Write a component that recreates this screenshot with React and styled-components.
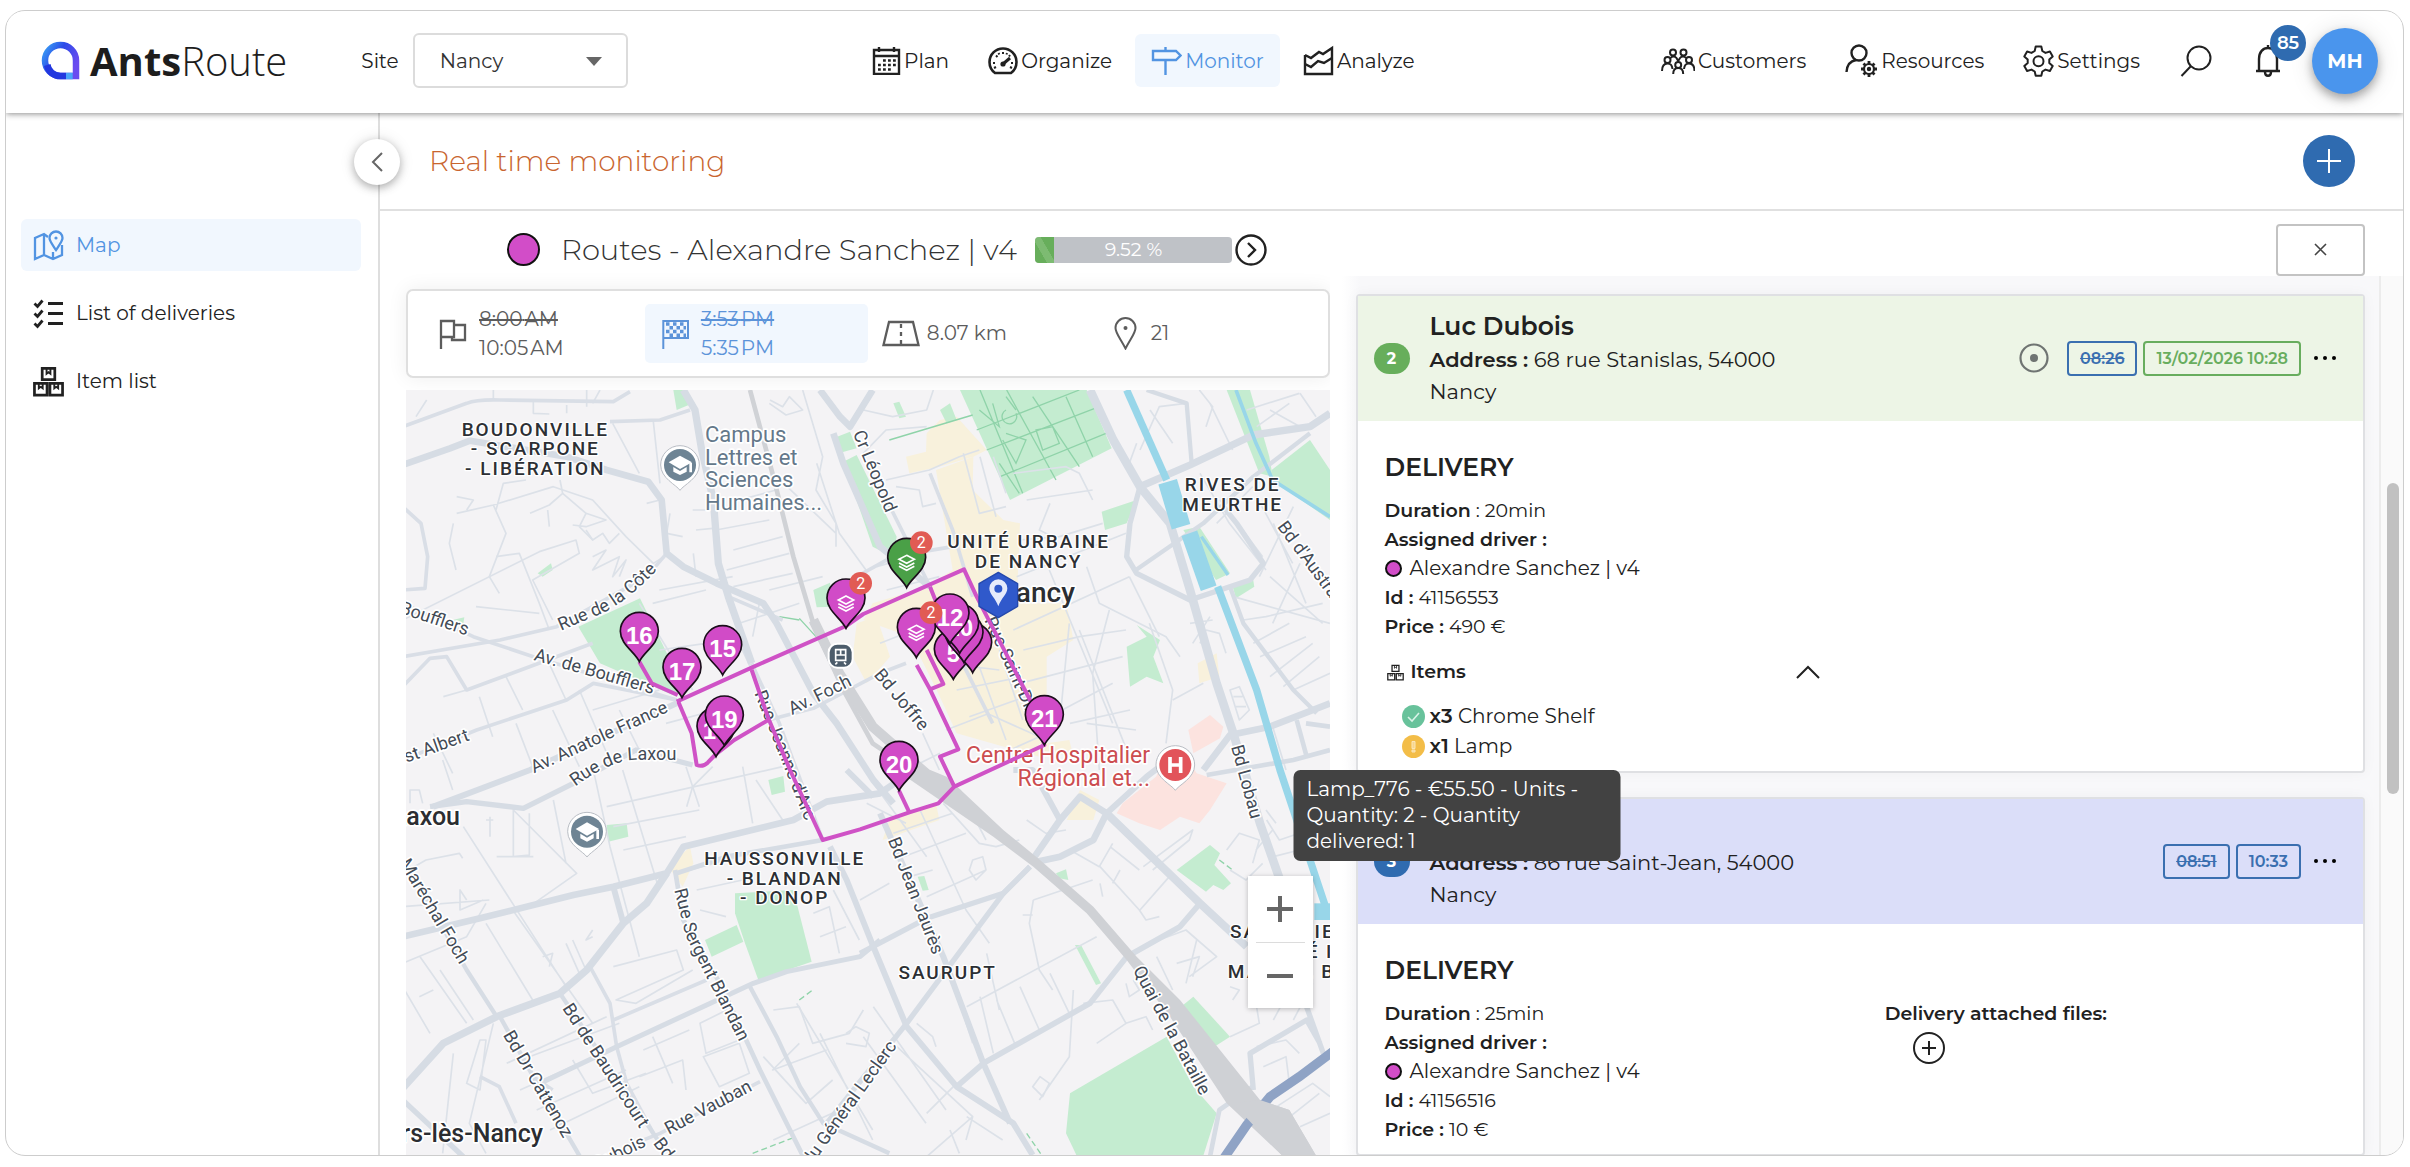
import styled, { createGlobalStyle, css } from "styled-components";

const GlobalStyle = createGlobalStyle`
    *, *::before, *::after { box-sizing: border-box; }
    body {
        margin: 0;
        background: #fff;
        color: #212121;
        font-family: Montserrat, Inter, "Open Sans", sans-serif;
        font-size: 20px;
    }
    h1, h2, h3, p, ul, dl, dd { margin: 0; padding: 0; font-weight: 400; }
    ul { list-style: none; }
    a { color: inherit; text-decoration: none; }
    button { font: inherit; color: inherit; background: none; border: 0; padding: 0; cursor: pointer; }
    svg { display: block; flex: none; }
`;

/* ---------- shell ---------- */

const Page = styled.div`
    height: 100vh;
    padding: 10px 6px 11px 5px;
`;

const Frame = styled.div`
    height: 100%;
    display: flex;
    flex-direction: column;
    border: 1px solid #cdcdcd;
    border-radius: 20px;
    overflow: hidden;
`;

const Header = styled.header`
    position: relative;
    z-index: 3;
    height: 102px;
    flex: none;
    display: flex;
    align-items: center;
    justify-content: space-between;
    padding: 0 25px 3px 35px;
    background: #fff;
    box-shadow: 0 1px 6px rgba(0, 0, 0, 0.45);
`;

const Group = styled.div`
    display: flex;
    align-items: center;
`;

const Brand = styled.a`
    display: flex;
    align-items: center;
    gap: 10px;
    margin-right: 74px;
    color: #1d1d1d;
    font: 300 40px "Open Sans", sans-serif;

    strong { font-weight: 700; }
`;

const SiteLabel = styled.label`
    margin-right: 14px;
`;

const SelectBox = styled.div`
    position: relative;

    svg {
        position: absolute;
        right: 26px;
        top: 24px;
        pointer-events: none;
    }
`;

const Select = styled.select`
    width: 215px;
    height: 55px;
    padding: 0 25px;
    appearance: none;
    border: 2px solid #dcdcdc;
    border-radius: 6px;
    background: #fff;
    font: inherit;
    color: #333;
`;

const Nav = styled.nav`
    display: flex;
    gap: 7px;
    margin-left: 14px;
`;

const NavLink = styled.a`
    display: flex;
    align-items: center;
    gap: 3px;
    height: 53px;
    padding: 0 16px;
    border-radius: 6px;
    ${({ $active }) => $active && css`
        background: #f1f7fe;
        color: #5294e2;
    `}
`;

const Tools = styled.div`
    display: flex;
    align-items: center;
    gap: 7px;
`;

const IconButton = styled.button`
    position: relative;
    display: flex;
    align-items: center;
    padding: 0 ${({ $pad }) => $pad || 16}px;
`;

const Count = styled.span`
    position: absolute;
    top: -19px;
    left: 34px;
    width: 36px;
    height: 36px;
    border-radius: 50%;
    background: #2f6bb0;
    color: #fff;
    font-size: 18px;
    font-weight: 600;
    line-height: 36px;
    text-align: center;
`;

const Avatar = styled.button`
    width: 66px;
    height: 66px;
    margin-left: 5px;
    border-radius: 50%;
    background: #4a95ed;
    color: #fff;
    font-size: 20px;
    font-weight: 700;
    box-shadow: 0 5px 10px rgba(0, 0, 0, 0.3), 0 2px 24px rgba(0, 0, 0, 0.12);
`;

const Body = styled.div`
    flex: 1;
    min-height: 0;
    display: flex;
`;

const Sidebar = styled.aside`
    position: relative;
    flex: none;
    width: 374px;
    padding: 106px 17px 0 15px;
    border-right: 2px solid #dedede;
`;

const Collapse = styled.button`
    position: absolute;
    z-index: 2;
    top: 26px;
    right: -22px;
    width: 46px;
    height: 46px;
    display: grid;
    place-items: center;
    border-radius: 50%;
    background: #fff;
    box-shadow: 0 3px 8px rgba(0, 0, 0, 0.28), 0 0 16px rgba(0, 0, 0, 0.1);
`;

const SideList = styled.ul`
    display: flex;
    flex-direction: column;
    gap: 16px;
`;

const SideLink = styled.a`
    display: flex;
    align-items: center;
    gap: 12px;
    height: 52px;
    padding: 0 12px;
    border-radius: 6px;
    ${({ $active }) => $active && css`
        background: #f1f7fe;
        color: #5294e2;
    `}
`;

const Main = styled.main`
    flex: 1;
    min-width: 0;
    display: flex;
    flex-direction: column;
`;

const TitleBar = styled.div`
    flex: none;
    height: 98px;
    display: flex;
    align-items: center;
    justify-content: space-between;
    padding: 0 48px 0 49px;
    border-bottom: 2px solid #e0e0e0;
`;

const Title = styled.h1`
    font-size: 28px;
    font-weight: 300;
    color: #c9652f;
`;

const AddButton = styled.button`
    width: 52px;
    height: 52px;
    display: grid;
    place-items: center;
    border-radius: 50%;
    background: #2f6bb0;
`;

const RouteBar = styled.div`
    flex: none;
    height: 65px;
    display: flex;
    align-items: center;
    padding: 12px 38px 0 127px;
`;

const Dot = styled.span`
    display: inline-block;
    flex: none;
    width: ${({ $size }) => $size}px;
    height: ${({ $size }) => $size}px;
    border: 2px solid #111;
    border-radius: 50%;
    background: #d24dc8;
`;

const RouteName = styled.h2`
    margin: 0 18px 0 21px;
    font-size: 29px;
    font-weight: 300;
    color: #333;
    white-space: nowrap;
`;

const Progress = styled.div`
    position: relative;
    width: 197px;
    height: 26px;
    margin-right: 3px;
    border-radius: 4px;
    overflow: hidden;
    background: #bfc2c7;
    color: #fff;
    font-size: 19px;
    line-height: 26px;
    text-align: center;
`;

const ProgressFill = styled.div`
    position: absolute;
    inset: 0 auto 0 0;
    background: linear-gradient(60deg, #67ae5b 35%, #7dbb72 36%, #7dbb72 60%, #67ae5b 61%);
`;

const CloseButton = styled.button`
    width: 89px;
    height: 52px;
    margin-left: auto;
    display: grid;
    place-items: center;
    border: 2px solid #c3c3c3;
    border-radius: 4px;
`;

const Columns = styled.div`
    flex: 1;
    min-height: 0;
    display: grid;
    grid-template-columns: minmax(0, 950fr) minmax(0, 1050fr) 24px;
    grid-template-rows: minmax(0, 1fr);
`;

/* ---------- left column ---------- */

const LeftColumn = styled.section`
    display: flex;
    flex-direction: column;
    gap: 12px;
    min-height: 0;
    padding: 13px 0 0 26px;
`;

const Stats = styled.div`
    flex: none;
    display: grid;
    grid-template-columns: repeat(4, 1fr);
    padding: 13px 14px;
    border: 2px solid #dfdfdf;
    border-radius: 7px;
    background: #fff;
    box-shadow: 0 0 20px rgba(0, 0, 0, 0.07);
`;

const Stat = styled.div`
    display: flex;
    align-items: center;
    gap: ${({ $gap }) => $gap || 12}px;
    min-height: 59px;
    padding: 0 ${({ $pad }) => $pad || 17}px;
    border-radius: 5px;
    line-height: 29px;
    color: #5c5c5c;
    ${({ $active }) => $active && css`
        background: #f1f7fe;
        color: #5b93d9;
    `}

    del, span { display: block; }
`;

const MapBox = styled.div`
    position: relative;
    flex: 1;
    min-height: 0;
    overflow: hidden;
    background: #f4f3f5;
`;

const MapSvg = styled.svg`
    width: 100%;
    height: 100%;
`;

const ZoomBox = styled.div`
    position: absolute;
    right: 17px;
    bottom: 147px;
    width: 65px;
    padding: 0 8px;
    background: #fff;
    box-shadow: 0 1px 5px rgba(0, 0, 0, 0.25);
`;

const ZoomButton = styled.button`
    width: 100%;
    height: 66px;
    display: grid;
    place-items: center;

    & + & { border-top: 1px solid #dcdcdc; }
`;

/* ---------- right column ---------- */

const List = styled.section`
    min-height: 0;
    display: flex;
    flex-direction: column;
    gap: 24px;
    padding: 18px 14px 0 26px;
    background: linear-gradient(to right, #fff 12px, #f8f8fa 30px);
`;

const Track = styled.div`
    padding: 207px 4px 0 6px;
    border-left: 2px solid #ececec;
    background: #fafafa;
`;

const Thumb = styled.div`
    height: 311px;
    border-radius: 6px;
    background: #c1c1c1;
`;

const Card = styled.article`
    flex: none;
    border: 2px solid #dfe0e3;
    border-radius: 4px;
    background: #fff;
    box-shadow: 0 0 14px rgba(0, 0, 0, 0.04);
`;

const CardHeader = styled.header`
    display: flex;
    align-items: center;
    padding: 12px 26px 13px 16px;
    background: ${({ $bg }) => $bg};
`;

const Step = styled.span`
    width: 36px;
    height: 31px;
    margin-right: 20px;
    border-radius: 16px;
    background: ${({ $bg }) => $bg};
    color: #fff;
    font-size: 16px;
    font-weight: 700;
    line-height: 31px;
    text-align: center;
`;

const Customer = styled.div`
    width: 380px;
    margin-right: auto;
    line-height: 32px;
    font-size: 21px;
`;

const CustomerName = styled.h3`
    min-height: 36px;
    font-size: 25px;
    font-weight: 600;
    line-height: 36px;
`;

const Bold = styled.strong`
    font-weight: 600;
`;

const Tag = styled.span`
    height: 35px;
    margin-left: 6px;
    padding: 0 11px;
    border: 2px solid;
    border-radius: 4px;
    color: ${({ $green }) => ($green ? "#68ad5e" : "#3a6fb0")};
    font-size: 16px;
    font-weight: 600;
    line-height: 32px;
    text-decoration: ${({ $old }) => ($old ? "line-through" : "none")};
`;

const MoreButton = styled.button`
    margin-left: 12px;
`;

const TargetIcon = styled.svg`
    margin-right: 12px;
`;

const CardBody = styled.div`
    display: grid;
    grid-template-columns: 1fr 1fr;
    column-gap: 48px;
    padding: 28px 26px 10px 27px;
`;

const SectionTitle = styled.h3`
    grid-column: 1 / -1;
    margin-bottom: 11px;
    font-size: 25px;
    font-weight: 600;
    line-height: 36px;
`;

const Details = styled.div`
    font-size: 19px;
    line-height: 29px;
`;

const Driver = styled.p`
    display: flex;
    align-items: center;
    gap: 8px;
    font-size: 20px;
`;

const Attached = styled.div`
    font-size: 19px;
    line-height: 29px;

    button { margin: 4px 28px; }
`;

const ItemsHead = styled.button`
    width: 100%;
    display: flex;
    align-items: center;
    gap: 7px;
    margin: 16px 0 14px;
    padding: 0 17px 0 2px;
    font-weight: 600;
    line-height: 30px;

    svg:last-child { margin-left: auto; }
`;

const Item = styled.li`
    position: relative;
    width: fit-content;
    display: flex;
    align-items: center;
    gap: 5px;
    margin-left: 17px;
    font-size: 20px;
    line-height: 30px;
    white-space: pre;
`;

const Tooltip = styled.div`
    position: absolute;
    z-index: 5;
    top: calc(100% + 9px);
    left: 50%;
    transform: translateX(-50%);
    width: 327px;
    padding: 6px 13px 7px;
    border-radius: 7px;
    background: #424242;
    color: #fff;
    font-size: 20px;
    line-height: 26px;
    white-space: normal;
`;

/* ---------- icons ---------- */

const Icon = ({ size = 32, width, height, box = "0 0 32 32", sw = 2, children }) => (
    <svg width={width || size} height={height || size} viewBox={box} fill="none" stroke="currentColor" strokeWidth={sw} aria-hidden="true">
        {children}
    </svg>
);

const LogoMark = () => (
    <svg width="39" height="39" viewBox="0 0 39 39" fill="none" aria-hidden="true">
        <defs>
            <linearGradient id="logoRing" x1="0" y1="0" x2="1" y2="0.6">
                <stop offset="0" stopColor="#3aa0f5" />
                <stop offset="0.45" stopColor="#2b4be8" />
                <stop offset="1" stopColor="#6a4bf0" />
            </linearGradient>
        </defs>
        <path d="M35 35V19.500A15.500 15.500 0 1 0 19.500 35Z" stroke="url(#logoRing)" strokeWidth="6.500" />
        <path d="M3 25A16.500 16.500 0 0 0 19.500 38.300H25V31.700H19.500A10 10 0 0 1 9.500 23Z" fill="#2237df" />
        <path d="M25 31.700H31.700V38.300H25Z" fill="#4aa5fa" />
    </svg>
);

const PlanIcon = () => (
    <Icon size={29} box="0 0 29 29">
        <path d="M2 4H27V28H2ZM2 10H27M7 1V6M22 1V6" strokeWidth="2.400" />
        <path d="M11 14.500H24M6 19H24M6 23.500H19" strokeWidth="2.600" strokeDasharray="2.800 2.200" />
    </Icon>
);

const GaugeIcon = () => (
    <Icon size={30} box="0 0 30 30">
        <path d="M7 27H23C27 24 28.500 20 28.500 16A13.500 13.500 0 0 0 1.500 16C1.500 20 3 24 7 27Z" strokeWidth="2.600" />
        <circle cx="15" cy="18" r="2.600" fill="currentColor" stroke="none" />
        <path d="M15 18L22 12" strokeWidth="3" />
        <path d="M5 17H7M23 17H25M15 6V8M8 9.500L9.500 11M22 9L21 10.500M6 22L8 21M24 22L22 21M10.500 7L11.300 8.500M19 7L18.500 8.500" />
    </Icon>
);

const SignIcon = () => (
    <Icon size={31} box="0 0 31 31">
        <path d="M2 6H25L29.500 10.500L25 15H2ZM14.500 2V6M14.500 16V30" strokeWidth="2.400" />
    </Icon>
);

const ChartIcon = () => (
    <Icon size={31} box="0 0 31 31">
        <path d="M2 10V29H29V3L20 9L16 7L8 13L2 10" strokeWidth="2.400" />
        <path d="M2 19L8 22L15 16L21 18L29 13" strokeWidth="2.400" />
    </Icon>
);

const CustomersIcon = () => (
    <Icon width={34} height={26} box="0 0 34 26">
        <circle cx="12" cy="4.500" r="3" />
        <circle cx="22.500" cy="4.500" r="3" />
        <circle cx="6.500" cy="12" r="3" />
        <circle cx="28" cy="12" r="3" />
        <circle cx="17.200" cy="17" r="3" />
        <path d="M1 23C1 18 3 15.500 6.500 15.500S11 17 11.500 21M33.500 23C33.500 18 31.500 15.500 28 15.500S23.500 17 23 21M12.200 26C12.200 22 14 20 17.200 20S22.200 22 22.200 26M9.500 10C11 8 14 8 15.500 10L17.200 13L19 10C20.500 8 23.500 8 25 10" />
    </Icon>
);

const ResourcesIcon = () => (
    <Icon width={33} height={34} box="0 0 33 34">
        <circle cx="14" cy="9" r="7.500" strokeWidth="2.400" />
        <path d="M1.500 28C2 21 5 17 11 16" strokeWidth="2.400" />
        <circle cx="24" cy="25" r="5" strokeWidth="2.200" />
        <circle cx="24" cy="25" r="1.200" fill="currentColor" />
        <path d="M24 17V20M24 30V33M16 25H19M29 25H32M18.500 19.500L20.500 21.500M27.500 28.500L29.500 30.500M29.500 19.500L27.500 21.500M20.500 28.500L18.500 30.500" strokeWidth="2.800" />
    </Icon>
);

const GearIcon = () => (
    <Icon width={31} height={32} box="0 0 31 32">
        <path d="M12.700 1.500H18.300L19.300 6L22.500 7.900L26.900 6.500L29.700 11.400L26.300 14.500V18L29.700 21.100L26.900 26L22.500 24.600L19.300 26.500L18.300 30.800H12.700L11.700 26.500L8.500 24.600L4.100 26L1.300 21.100L4.700 18V14.500L1.300 11.400L4.100 6.500L8.500 7.900L11.700 6Z" strokeLinejoin="round" />
        <circle cx="15.500" cy="16.200" r="5" />
    </Icon>
);

const SearchIcon = () => (
    <Icon size={32}>
        <circle cx="19" cy="13" r="11.500" />
        <path d="M11 21L1.500 31" />
    </Icon>
);

const BellIcon = () => (
    <Icon width={26} height={34} box="0 0 26 34">
        <path d="M1 27H25M4 27V15C4 8 8 4 13 4S22 8 22 15V27M13 1V4" strokeWidth="2.400" />
        <path d="M10 28C10 33 16 33 16 28" strokeWidth="2.400" />
    </Icon>
);

const MapIcon = () => (
    <Icon size={31} box="0 0 31 31">
        <path d="M15 7L11 4L2 8V29L11 25L20 29L29 25V15M11 4V25M20 22V29" strokeWidth="2.300" />
        <path d="M23 20C19 14 16.500 11 16.500 8A6.500 6.500 0 0 1 29.500 8C29.500 11 27 14 23 20Z" strokeWidth="2.300" />
        <circle cx="23" cy="8" r="1.600" fill="currentColor" stroke="none" />
    </Icon>
);

const ChecklistIcon = () => (
    <Icon size={31} box="0 0 31 31">
        <path d="M15 5.500H30M15 15.500H30M15 25.500H30" strokeWidth="2.800" />
        <path d="M1.500 5.500L4.500 8.500L9.500 2.500M1.500 15.500L4.500 18.500L9.500 12.500M1.500 25.500L4.500 28.500L9.500 22.500" strokeWidth="2.800" />
    </Icon>
);

const BoxesIcon = ({ size = 31, sw = 2.800 }) => (
    <Icon size={size} sw={sw}>
        <path d="M9.500 2.500H22.500V14H9.500ZM1.500 18H14.500V30H1.500ZM17.500 18H30.500V30H17.500Z" />
        <path d="M14 3V8L16 6.500L18 8V3M6 18V23L8 21.500L10 23V18M22 18V23L24 21.500L26 23V18" strokeWidth={sw * 0.7} />
    </Icon>
);

const FlagIcon = () => (
    <Icon width={28} height={32} box="0 0 28 32">
        <path d="M2 31V3H15V19H2M15 7H26V22H13V19" strokeWidth="2.300" />
    </Icon>
);

const FinishIcon = () => (
    <Icon width={27} height={30} box="0 0 27 30">
        <path d="M1.300 30V2H26V19H1.300" />
        <path d="M4 5H24M4 12.500H24" strokeWidth="3.500" strokeDasharray="3.500 3.500" />
        <path d="M7.500 8.700H24M7.500 16.200H24" strokeWidth="3.500" strokeDasharray="3.500 3.500" />
    </Icon>
);

const RoadIcon = () => (
    <Icon width={38} height={27} box="0 0 38 27">
        <path d="M7 2H31L36.500 25H1.500ZM19 4V8M19 12V16M19 20V24" strokeWidth="2.300" />
    </Icon>
);

const PinIcon = () => (
    <Icon width={23} height={33} box="0 0 23 33">
        <path d="M11.500 31.500C6 21 1.500 16 1.500 11A10 10 0 0 1 21.500 11C21.500 16 17 21 11.500 31.500Z" />
        <circle cx="11.500" cy="11" r="2" fill="currentColor" stroke="none" />
    </Icon>
);

const CheckBadge = () => (
    <svg width="23" height="23" viewBox="0 0 23 23" aria-hidden="true">
        <circle cx="11.500" cy="11.500" r="11.500" fill="#68c29b" />
        <path d="M6 12L10 16L17 8" fill="none" stroke="#d9f3e8" strokeWidth="1.600" />
    </svg>
);

const AlertBadge = () => (
    <svg width="23" height="23" viewBox="0 0 23 23" aria-hidden="true">
        <circle cx="11.500" cy="11.500" r="11.500" fill="#f3bd48" />
        <path d="M10 6.500H13V13.500H10ZM10 15H13V17H10Z" fill="#f8d68c" stroke="#fbe6b8" strokeWidth="1" />
    </svg>
);

/* ---------- map drawing, three units to a pixel ---------- */

const parks = [
    "M517 710L702 625L812 850V920L582 820Z",
    "M802 0H830L848 45L812 60Z",
    "M1282 145L1332 125L1352 175L1297 190Z",
    "M1312 215L1352 195L1472 440L1460 500L1400 470Z",
    "M1222 600L1272 578L1282 650L1232 652Z",
    "M395 550L435 520L440 540L410 560Z",
    "M140 690L175 682L172 700Z",
    "M1662 0H2042L2117 175L1812 330Z",
    "M1602 60L1632 40L1652 90L1622 100Z",
    "M1462 40L1480 35L1500 80L1480 85Z",
    "M2087 365L2192 330L2162 400L2097 420Z",
    "M2162 770L2222 740L2192 705L2262 750L2242 800L2272 880L2222 860L2172 890Z",
    "M2462 0H2532L2590 200L2600 260L2560 250Z",
    "M2597 240L2712 150L2772 240V390L2600 270Z",
    "M2332 420L2380 410L2472 550L2430 570Z",
    "M2480 590L2540 560L2545 590L2490 625Z",
    "M987 1510L1162 1500L1217 1715L1057 1770L1017 1660L987 1570Z",
    "M897 1650L992 1605L1012 1655L917 1700Z",
    "M602 1305L662 1300L667 1340L607 1355Z",
    "M1087 1170L1132 1158L1137 1205L1097 1215Z",
    "M2312 1440L2412 1365L2442 1390L2425 1425L2475 1480L2452 1500L2422 1485L2400 1505Z",
    "M2007 1665L2025 1665L2085 1780L2070 1785Z",
    "M2325 1850L2362 1820L2472 1940L2425 1970Z",
    "M2282 1940L1992 2110L1980 2230L2012 2297H2392L2432 2170L2362 2090Z",
    "M1950 1450L1980 1438L1987 1470L1960 1465Z",
    "M1535 1460L1555 1458L1568 1500L1550 1502Z",
];

const districts = [
    "M1562 130L1602 90L1652 80L1742 180L1702 200L1600 230L1510 250L1500 200L1560 185Z",
    "M1590 240L1702 200L1700 300L1792 390L1842 400L1832 640H1982L2002 750L1922 800L1922 1060L1990 1050L2000 1090L1900 1100L1652 1030L1592 900L1512 740L1372 690L1400 640L1562 590L1640 540Z",
    "M1352 700L1412 680L1452 800L1382 880L1340 800Z",
    "M2375 820L2432 790L2440 860L2380 880Z",
    "M2022 1200L2080 1230L2062 1290L1982 1290Z",
    "M1450 1290L1590 1240L1600 1290L1430 1350Z",
    "M787 1430L852 1370L862 1420L830 1490Z",
];

const hospital = [
    "M2347 1020L2412 975L2452 1010L2442 1045L2362 1090Z",
    "M2250 1160L2290 1085L2340 1100L2372 1150L2462 1180L2412 1260L2380 1300L2322 1280L2262 1320L2200 1300L2132 1270L2150 1240Z",
];

const water = [
    { d: "M2162 0L2282 270", w: 22 },
    { d: "M2285 275L2325 410", w: 58 },
    { d: "M2350 430L2408 595", w: 50 },
    { d: "M2435 590L2552 900L2622 1140L2762 1560", w: 22 },
    { d: "M2490 0L2550 160L2600 270L2772 380", w: 11 },
    { d: "M2755 1540V1590", w: 60 },
    { d: "M2386 440L2466 555", w: 10 },
];

const railway = [
    { d: "M1032 0L1102 260L1162 500L1222 700L1312 900L1400 1060L1532 1150", w: 14 },
    { d: "M1222 690L1300 850L1400 1010L1560 1150", w: 30 },
];

const majorRoads = [
    { d: "M-10 225L132 175L192 152L482 200L602 240L727 275L767 330L782 490L832 530L932 580L1072 640L1112 700L1222 910L1292 1000L1402 1170L1462 1240", w: 20 },
    { d: "M832 0L867 60L887 180L922 330L937 520L967 620L1037 820", w: 22 },
    { d: "M1242 0L1302 80L1332 110L1400 0", w: 20 },
    { d: "M1282 130L1312 220L1422 470L1572 590", w: 20 },
    { d: "M2052 0L2122 150L2202 290L2292 400L2352 600L2432 880L2482 1030L2562 1300L2622 1470", w: 26 },
    { d: "M2202 290L2352 225L2542 135L2712 110L2772 70", w: 22 },
    { d: "M2202 290L2172 400L2162 500L2192 550L2352 630L2532 570L2572 520L2492 400L2452 350", w: 16 },
    { d: "M2182 545L2392 400L2542 260L2712 130", w: 13 },
    { d: "M2222 0L2342 40L2357 220", w: 13 },
    { d: "M2392 1140L2472 1035L2592 1010L2772 940", w: 20 },
    { d: "M2402 1155L2662 1110L2772 1080M2672 990L2702 1100M2700 1000L2772 1010", w: 14 },
    { d: "M2472 590L2512 700L2662 900L2732 970", w: 13 },
    { d: "M-10 1640L222 1585L502 1515L622 1490L782 1450L832 1370L1162 1290L1262 1235L1422 1210L1510 1150", w: 20 },
    { d: "M782 1450L722 1540L652 1600L542 1740L462 1810L272 1880L112 1960L-10 2095", w: 22 },
    { d: "M622 1490L652 1600", w: 18 },
    { d: "M812 1450L962 1400L1250 1350", w: 14 },
    { d: "M1322 1140L1402 1220M1272 1370L1322 1470L1402 1670L1502 1910L1652 2090L1822 2200L1880 2295", w: 18 },
    { d: "M1422 1270L1612 1700L1732 2020L1812 2200", w: 18 },
    { d: "M1362 1690L1562 1585L1792 1510L1872 1430", w: 16 },
    { d: "M1872 1430L1792 1510L1502 1900L1422 2000L1262 2200", w: 16 },
    { d: "M1652 2090L1732 2020L2052 1840L2162 1700L2322 1610L2382 1540", w: 17 },
    { d: "M2102 1270L2382 1540L2522 1670", w: 24 },
    { d: "M1872 1420L1962 1290L2022 1220L2102 1270L2062 1350L1962 1400L1892 1415", w: 20 },
    { d: "M1822 1140L1880 1140L1962 1290M2102 1270L2222 1160L2300 1100", w: 18 },
    { d: "M2542 2100L2532 1990L2702 1890L2742 1960M2662 1740L2752 1990", w: 16 },
    { d: "M-10 2130L172 2300", w: 16 },
    { d: "M72 1250L182 1235L352 1255L502 1180L690 1080L860 1125", w: 16 },
    { d: "M82 1250L372 1140L812 940", w: 18 },
    { d: "M282 1880L382 2060L522 2300M-10 1400L182 1740L272 1880", w: 13 },
    { d: "M462 1810L582 1990L762 2260", w: 13 },
    { d: "M807 1440L832 1590L942 1780L1062 2040L1192 2300", w: 14 },
    { d: "M412 2075L632 1970L902 1845L1042 1780L1142 1745L1362 1700L1422 1650", w: 15 },
    { d: "M1032 1790L1112 1940L1182 2090L1252 2200L1450 2290", w: 13 },
    { d: "M2412 2300L2440 2160L2540 2090", w: 14 },
];

const mediumRoads = [
    "M-10 110L182 40Q212 28 282 30L622 35L672 5M612 95L762 90L852 60",
    "M-10 600L57 595L65 500L45 400L-10 350",
    "M-10 640L202 740L382 800L812 930",
    "M-10 800L282 750L452 710L722 560L782 490",
    "M-10 890L72 805L122 800L182 900L560 760",
    "M-10 1110L212 1020L482 930L562 880L812 930",
    "M1087 990L1222 955L1422 850L1500 820",
    "M552 1730L612 1840L632 1970L662 2080L742 2230M622 1890L902 1770",
    "M662 2270L762 2230L1062 2075",
    "M967 620L1130 690M1037 820L1120 1000L1250 1350",
    "M1442 330L1572 590L1640 760L1760 1000M1572 250L1640 420L1700 620M1280 600L1460 500L1640 470",
    "M222 2060L280 2090L330 2200M382 2060L440 2100",
];

const minorRoads = [
    "M62 30L30 80M262 0V28M382 30V70L430 72M582 0L560 40M542 0V50M482 45V70M742 95L762 280M620 100L700 250",
    "M152 320L202 330L182 360M152 370L262 345L442 290L560 330L660 440L742 520L782 495M262 345L300 430L250 560L280 610M142 400L130 460L150 540M270 360L292 280L360 270",
    "M462 270L470 310L540 370L600 390L540 410L500 405M372 370L430 345L470 310M430 410L425 360M540 370L520 410L560 450",
    "M540 420L560 450L590 430L610 460L640 430M560 500L600 480L560 540L640 500L620 560L660 510L640 560",
    "M-10 690L400 485L510 450L520 490L380 570L440 690M270 500L340 490L400 640L430 720M210 650L400 670M100 700L20 650",
    "M722 340L762 330M792 370L782 430L830 440M860 360H900M870 420L920 415M862 490L870 560",
    "M982 480L1130 440M962 540L1150 490M982 590L1160 550M930 420L1090 390M1000 330L1110 300M760 600L980 560M740 640L900 600",
    "M1092 30L1130 50L1150 20L1190 60L1140 75L1090 40M1232 220L1300 430L1380 540M1102 250L1290 430M1190 0L1250 200L1230 300L1290 400V470",
    "M1090 600L1250 560M1060 640L1040 740M1000 700L1180 640M760 780L900 760M700 640L860 900M1000 760L1060 890M780 1000L930 960",
    "M300 860L350 960M220 920L260 1040M420 800L480 930M112 920L182 900M82 1030L140 1150M520 900L620 1130M440 960L520 1130M640 960L700 1080M560 960L760 900",
    "M12 1240V1200H40L50 1240M110 1110L140 1200M330 1000L380 1130M840 1130L880 1250M560 1130L612 1370L700 1700M650 1140L760 1500",
    "M252 1280V1340M262 1290H240M322 1250V1400L370 1395V1270M272 1400H382M322 1260L512 1450L370 1550M442 1230L480 1420M182 1530L162 1500V1560L232 1530M-10 1550L250 1530",
    "M172 1310L480 1790M-10 1450L60 1410L160 1390L170 1405M240 1600L380 1830M320 1560L560 1900M-10 1720L182 1640L240 1540",
    "M102 1740L202 1890M-10 1790L72 1930M42 1700L182 1900M82 1800L40 1820M142 1990L110 2290M262 1900L190 2200L240 2290M222 1950H240L222 2100L182 2080Z",
    "M302 2020L602 1880M342 2100L632 1970M392 2160L660 2040M432 2220L700 2090M370 2000L640 1900M500 2010L560 2110L720 2050",
    "M622 1730L812 1680L832 1740L630 1830L690 1840L860 1740M560 1620L540 1650L560 1640M410 1700L440 1690L430 1730M500 1650L540 1740M480 1660L520 1750",
    "M882 1900L962 1860L1000 1950L900 1990ZM892 2000L1000 1960L1030 2050L940 2090ZM700 2060L830 2010L840 2100M740 1940L800 2080M712 1980L850 1920",
    "M1102 1860L1180 1850L1220 1960L1330 1930L1372 1860M1320 1930L1350 1910L1390 1930L1380 1970L1320 1960M1180 1960L1100 2040L1262 1980M1072 2000L1200 2140L1280 2070",
    "M1172 1840L1400 2220M1102 2250L1300 2160M1242 1930L1400 2250M1222 1570L1270 1550L1300 1690M1242 1640L1320 1610M1282 1500L1360 1650",
    "M602 1250L1130 1130M622 1310L880 1260M652 1380L840 1340M852 1440L1000 1400M872 1500L1010 1470M882 1560L960 1580M842 1250L860 1190L920 1130M1010 1130L1040 1300M1050 1170L1130 1290",
    "M1372 60L1460 80L1562 60L1582 0M1372 190L1440 120L1562 110M1440 270L1570 240L1660 200L1720 180M1470 290L1540 300L1550 350L1590 340",
    "M1672 190L1720 370L1800 350M1722 200L1770 380M1762 200L1800 310M1822 250L1980 230L2020 250L2060 330M1932 340L1900 420L1940 440M1862 330L2060 300",
    "M1840 450L1960 440L2090 400M1832 560L2160 430M1822 720L2170 560M1930 540L2120 1000M2042 530L2080 640L2280 740L2322 800M1990 700L1960 1010M2110 660L2060 850L2080 1140",
    "M1852 780L2020 740L2160 720M1842 880L2150 800M1912 990L2120 880M1992 1000L2172 960M2020 720L2170 1100M2042 1000L2190 1020M2230 700L2300 900L2280 1060M2170 560L2260 740",
    "M1412 530L1520 500M1442 600L1600 560M1422 760L1600 690M1632 760L1720 780M1620 820L1780 840M1652 900L1850 860M1690 980L1860 920M1780 780L1850 990M1720 830L1800 1050",
    "M1602 1090L1500 1140M1620 1020L1750 970M1742 970L1900 1040L1790 1090M1550 1030L1600 1140",
    "M2202 180L2260 50L2340 40M2192 160L2170 220M2232 60L2300 160M2380 0L2420 50L2400 110M2412 40L2480 180M2522 60L2680 10M2552 110L2650 40M2592 60L2700 120M2682 10L2730 80",
    "M2382 250L2470 400L2580 540M2442 330L2570 500M2432 400L2540 290M2552 320L2660 520M2602 400L2700 640M2662 350L2560 560M2592 560L2750 700M2682 520L2600 700",
    "M2482 620L2772 700M2512 690L2580 680L2750 640M2542 760L2650 700M2562 800L2700 740M2592 860L2720 760M2632 890L2740 800M2382 760L2400 720L2440 730L2460 790",
    "M2472 900L2500 890L2530 960L2500 990ZM2482 920H2510M2490 950H2520M2412 680L2360 760M2352 700L2420 690M2392 880L2300 930M2662 900L2772 850M2600 1010L2640 1140",
    "M1382 1240L1500 1300M1402 1180L1562 1400M1462 1330L1640 1270M1492 1400L1680 1330M1512 1460L1580 1440M1542 1260L1680 1560L1750 1660M1612 1240L1720 1360L1770 1370L1840 1350M1662 1200L1740 1350",
    "M1362 1530L1450 1480M1562 1520L1740 1440M1690 1440L1700 1410L1730 1400L1740 1440L1710 1470ZM1882 1530L2060 1470M1882 1530L1870 1600L1900 1740L1940 1800M1850 1575H1880",
    "M1682 1850L2072 1640M1722 1820L1762 1990M1772 1830L1830 1970M1842 1790L1900 1920M1932 1750L1990 1870M1642 1780L1700 1960M1742 1690L1780 1860",
    "M2002 1800L1990 2000L1900 2130M2032 1840L2120 1830L2160 1900L2072 1960M2160 1900L2220 1880L2240 1920M1902 2060L1930 2080L1910 2120L1880 2090Z",
    "M1862 1290L1920 1330L1980 1320M1992 1380L2080 1430L2120 1360M2082 1430L2200 1560L2220 1590L2260 1580M2112 1370L2200 1440M2142 1440L2120 1480M2082 1480L2090 1520M2202 1560L2290 1460",
    "M2212 1430L2360 1320L2350 1350L2240 1440M2462 1380L2500 1330L2560 1350L2540 1420M2472 1440L2520 1470L2570 1420M2582 1290L2620 1350L2680 1330M2602 1400L2680 1380M2550 1380L2600 1320M2580 1260L2610 1300",
    "M2232 1660L2340 1620L2432 1700L2350 1760M2252 1700L2300 1800M2372 1650L2340 1780M2182 1770L2200 1800L2170 1820L2160 1780M2312 1720L2380 1700L2360 1760M2472 1790L2500 1800L2480 1830",
    "M2472 1940L2560 1900L2540 1780M2552 1970L2640 1950L2680 1990M2572 2030L2640 2000L2650 2080M2612 2150L2720 2080L2772 2120M2652 2180L2740 2110M2682 2210L2772 2170M2662 1890L2720 1780M2602 1890L2640 1820",
    "M1372 1940L1560 2200M1402 1850L1620 2160M1462 1960L1700 2180L1680 2250M1532 1900L1580 1940L1590 1970M1562 2170L1642 2090M1682 2180L1790 2250M1632 2220L1660 2290M1562 2300L1700 2180",
];

const railArea =
    "M1470 1140L1500 1110L1622 1160L1792 1320L1902 1410L2062 1550L2192 1700L2322 1830L2562 2130L2650 2160L2732 2300H2632L2462 2140L2292 1880L2162 1710L2042 1570L1882 1430L1762 1340Z";

const routeLines = [
    "M700 815L737 880L815 915",
    "M812 935L1032 835L1320 708L1372 672L1674 538L1712 620L1872 930L1915 1065L1645 1190L1597 1240L1510 1267L1362 1318L1250 1350L1152 1140L1087 985L1037 840",
    "M1645 1190L1602 1100L1657 1078L1572 898L1532 825M1572 898L1612 882L1562 780M1572 590L1600 660",
    "M817 935L857 1030L872 1125Q890 1132 905 1118L927 1095L985 1050L1087 990",
    "M1479 1202L1510 1267",
];

const streets = [
    { id: "cote", d: "M465 722L600 665Q680 620 762 530", text: "Rue de la Côte" },
    { id: "boufflersWest", d: "M-22 668Q90 705 205 745", text: "Boufflers" },
    { id: "boufflers", d: "M382 810Q560 860 760 918", text: "Av. de Boufflers" },
    { id: "albert", d: "M-100 1155L220 1040", text: "Ernest Albert" },
    { id: "anatole", d: "M384 1150L810 955", text: "Av. Anatole France" },
    { id: "laxou", d: "M508 1190Q620 1105 700 1110L830 1110", text: "Rue de Laxou" },
    { id: "foch", d: "M1158 975Q1260 925 1350 880", text: "Av. Foch" },
    { id: "jeanne", d: "M1045 910L1090 1020L1200 1300", text: "Rue Jeanne d'Arc" },
    { id: "leopold", d: "M1340 130L1440 370", text: "Cr Léopold" },
    { id: "joffre", d: "M1402 855L1540 1020", text: "Bd Joffre" },
    { id: "saintDizier", d: "M1735 690L1875 1000", text: "Rue Saint-Dizier" },
    { id: "austrasie", d: "M2612 410L2850 730", text: "Bd d'Austrasie" },
    { id: "lobau", d: "M2475 1070L2535 1290", text: "Bd Lobau" },
    { id: "marechal", d: "M-20 1420L170 1740", text: "Maréchal Foch" },
    { id: "cattenoz", d: "M290 1935L480 2260", text: "Bd Dr Cattenoz" },
    { id: "baudricourt", d: "M468 1855L710 2230", text: "Bd de Baudricourt" },
    { id: "sergent", d: "M805 1500L840 1640L1010 1975", text: "Rue Sergent Blandan" },
    { id: "vauban", d: "M788 2235L1060 2090", text: "Rue Vauban" },
    { id: "jaures", d: "M1445 1350L1590 1720", text: "Bd Jean Jaurès" },
    { id: "leclerc", d: "M1215 2330L1480 1960", text: "du Général Leclerc" },
    { id: "bataille", d: "M2180 1740L2390 2130", text: "Quai de la Bataille" },
    { id: "bois", d: "M572 2340L720 2268", text: "Dubois" },
    { id: "bd", d: "M740 2260L800 2340", text: "Bd" },
];

const areas = [
    { x: 388, y: 137, lines: ["BOUDONVILLE", "- SCARPONE", "- LIBÉRATION"] },
    { x: 1868, y: 475, lines: ["UNITÉ URBAINE", "DE NANCY"] },
    { x: 2480, y: 303, lines: ["RIVES DE", "MEURTHE"] },
    { x: 1136, y: 1425, lines: ["HAUSSONVILLE", "- BLANDAN", "- DONOP"] },
    { x: 1625, y: 1768, lines: ["SAURUPT"] },
    { x: 2690, y: 1645, lines: ["SAINT-PIERRE", "- RENÉ II -", "MARCEL BROT"] },
];

const pins = [
    { x: 700, y: 815, label: "16" },
    { x: 950, y: 855, label: "15" },
    { x: 828, y: 923, label: "17" },
    { x: 930, y: 1100, label: "18" },
    { x: 955, y: 1066, label: "19" },
    { x: 1320, y: 715, layers: 2 },
    { x: 1502, y: 593, layers: 2, color: "#4aa047" },
    { x: 1642, y: 868, label: "5" },
    { x: 1700, y: 848 },
    { x: 1674, y: 818 },
    { x: 1661, y: 790, label: "10" },
    { x: 1632, y: 760, label: "12" },
    { x: 1531, y: 803, layers: 2 },
    { x: 1915, y: 1065, label: "21" },
    { x: 1479, y: 1202, label: "20" },
];

const Pin = ({ x, y, label, layers, color = "#d14bc7" }) => (
    <g transform={`translate(${x} ${y})`}>
        <path d="M0 0C-14 -30 -57 -52 -57 -91A57 57 0 1 1 57 -91C57 -52 14 -30 0 0Z" fill={color} stroke="#1a0d1a" strokeWidth="5" />
        {label && (
            <text y="-53" textAnchor="middle" fontFamily="Liberation Sans, sans-serif" fontWeight="700" fontSize="72" fill="#fff">{label}</text>
        )}
        {layers && (
            <>
                <path d="M0 -97L23 -85L0 -73L-23 -85ZM-23 -74L0 -62L23 -74M-23 -64L0 -52L23 -64" fill="none" stroke="#fff" strokeWidth="5" />
                <circle cx="44" cy="-135" r="34" fill="#e15b54" />
                <text x="44" y="-118" textAnchor="middle" fontFamily="Roboto, sans-serif" fontSize="48" fill="#fff">{layers}</text>
            </>
        )}
    </g>
);

const Place = ({ x, y, color, children }) => (
    <g transform={`translate(${x} ${y})`}>
        <path d="M0 76C-10 60 -58 40 -58 0A58 58 0 1 1 58 0C58 40 10 60 0 76Z" fill="#fff" stroke="#b9bdc4" strokeWidth="3" />
        <circle r="48" fill={color} />
        {children}
    </g>
);

const School = () => (
    <>
        <path d="M-34 -8L0 -28L36 -8L0 12Z" fill="#fff" />
        <path d="M-20 6V20L0 30L20 20V6L0 18ZM28 -6H36V22H28Z" fill="#fff" />
    </>
);

const CityMap = () => (
    <MapSvg viewBox="0 0 2772 2295" preserveAspectRatio="xMinYMin slice" role="img" aria-label="Map of Nancy">
        <rect width="2772" height="2295" fill="#f4f3f5" />
        <g fill="#f8f1dc">{districts.map((d) => <path key={d} d={d} />)}</g>
        <g fill="#fce3df">{hospital.map((d) => <path key={d} d={d} />)}</g>
        <g fill="#c4ecd0">{parks.map((d) => <path key={d} d={d} />)}</g>
        <g fill="none" stroke="#8fd3a9" strokeWidth="4">
            <path d="M1712 120L2020 0M1742 180L2080 50M1782 260L2100 130M1722 0L1850 310M1802 0L1950 270M1880 20L2020 230M1980 20L2060 200M1720 60L1780 110L1760 40M1830 60L1800 20M1790 150L1830 220L1860 150L1800 130M1780 220L1840 310M1890 120L1940 110L1960 160L1910 180ZM1800 60A22 22 0 1 0 1830 70M1450 150L1700 75M1180 685L1230 740M1120 680L1180 690" />
            <path d="M1862 2230L1910 2300M2440 1410L2480 1440M1180 1830L1220 1800M1040 2290L1170 2240" strokeDasharray="18 10" />
        </g>
        <g fill="none" stroke="#dce1e8" strokeWidth="5" strokeLinejoin="round">{minorRoads.map((d) => <path key={d} d={d} />)}</g>
        <g fill="none" stroke="#d9dee6" strokeWidth="11" strokeLinejoin="round">{mediumRoads.map((d) => <path key={d} d={d} />)}</g>
        <g fill="none" stroke="#d6dce4" strokeLinejoin="round">{majorRoads.map(({ d, w }) => <path key={d} d={d} strokeWidth={w} />)}</g>
        <g fill="none" stroke="#98d6e9" strokeLinejoin="round">{water.map(({ d, w }) => <path key={d} d={d} strokeWidth={w} />)}</g>
        <g fill="none" stroke="#d0d2d6">{railway.map(({ d, w }) => <path key={d} d={d} strokeWidth={w} />)}</g>
        <path d={railArea} fill="#cfd1d5" />
        <path d="M2450 2310L2522 2205L2592 2120L2680 2060L2780 1985" fill="none" stroke="#8fa3c5" strokeWidth="28" />
        <path d="M2562 2130L2650 2160L2732 2300H2632L2480 2140Z" fill="#cfd1d5" />

        <g fontFamily="Roboto, sans-serif" paintOrder="stroke" stroke="#fff" strokeWidth="10" strokeLinejoin="round">
            <g fontSize="54" fill="#434b56">
                {streets.map(({ id, d, text }) => (
                    <g key={id}>
                        <path id={`street-${id}`} d={d} fill="none" stroke="none" />
                        <text><textPath href={`#street-${id}`}>{text}</textPath></text>
                    </g>
                ))}
            </g>
            <g fontWeight="500" fill="#2b2d31">
                <text x="-40" y="1305" fontSize="75">Laxou</text>
                <text x="-160" y="2255" fontSize="75">Villers-lès-Nancy</text>
                <text x="1770" y="635" fontSize="84">Nancy</text>
            </g>
            <g fontSize="66" fill="#64788a">
                <text x="897" y="155">Campus</text>
                <text x="897" y="224">Lettres et</text>
                <text x="897" y="292">Sciences</text>
                <text x="897" y="361">Humaines...</text>
            </g>
            <g fontSize="69" fill="#cc4d50" textAnchor="end">
                <text x="2232" y="1120">Centre Hospitalier</text>
                <text x="2232" y="1188">Régional et...</text>
            </g>
        </g>

        <Place x={822} y={225} color="#6e8494"><School /></Place>
        <Place x={543} y={1325} color="#6e8494"><School /></Place>
        <Place x={2308} y={1125} color="#e2545a">
            <path d="M-16 -24V24M16 -24V24M-16 0H16" stroke="#fff" strokeWidth="11" fill="none" />
        </Place>
        <g transform="translate(1304 797)">
            <rect x="-36" y="-36" width="72" height="72" rx="26" fill="#4c5c6b" stroke="#fff" strokeWidth="6" />
            <path d="M-15 -18H15V14H-15ZM-10 20L-16 26M10 20L16 26M-15 -2H15M0 -18V-2" fill="none" stroke="#fff" strokeWidth="5" />
        </g>

        <g fill="none" stroke="#cf52c6" strokeWidth="12" strokeLinejoin="round">{routeLines.map((d) => <path key={d} d={d} />)}</g>

        <g fontFamily="Roboto, sans-serif" fontSize="57" fontWeight="500" letterSpacing="6" fill="#2c2f34" textAnchor="middle" paintOrder="stroke" stroke="#fff" strokeWidth="8" strokeLinejoin="round">
            {areas.map(({ x, y, lines }) =>
                lines.map((line, i) => <text key={line} x={x} y={y + i * 59}>{line}</text>)
            )}
        </g>

        {pins.map((pin) => <Pin key={`${pin.x}-${pin.y}`} {...pin} />)}

        <g transform="translate(1777 615)">
            <path d="M0 -68L58 -34V34L0 68L-58 34V-34Z" fill="#3059cb" stroke="#2448ac" strokeWidth="4" strokeLinejoin="round" />
            <path d="M0 34C-8 10 -27 -2 -27 -20A27 27 0 1 1 27 -20C27 -2 8 10 0 34Z" fill="#e6ebfb" />
            <circle cy="-19" r="12" fill="#3059cb" />
        </g>
    </MapSvg>
);

/* ---------- data ---------- */

const navItems = [
    { label: "Plan", icon: <PlanIcon /> },
    { label: "Organize", icon: <GaugeIcon /> },
    { label: "Monitor", icon: <SignIcon />, active: true },
    { label: "Analyze", icon: <ChartIcon /> },
];

const toolItems = [
    { label: "Customers", icon: <CustomersIcon /> },
    { label: "Resources", icon: <ResourcesIcon /> },
    { label: "Settings", icon: <GearIcon /> },
];

const sideItems = [
    { label: "Map", icon: <MapIcon />, active: true },
    { label: "List of deliveries", icon: <ChecklistIcon /> },
    { label: "Item list", icon: <BoxesIcon /> },
];

const deliveries = [
    {
        id: "41156553",
        step: 2,
        name: "Luc Dubois",
        address: "68 rue Stanislas, 54000 Nancy",
        bg: "#edf5e6",
        stepBg: "#67ae5b",
        target: true,
        planned: "08:26",
        actual: "13/02/2026 10:28",
        done: true,
        duration: "20min",
        price: "490 €",
        items: [
            { qty: "x3", name: "Chrome Shelf", ok: true },
            { qty: "x1", name: "Lamp", tip: "Lamp_776 - €55.50 - Units - Quantity: 2 - Quantity delivered: 1" },
        ],
    },
    {
        id: "41156516",
        step: 3,
        address: "86 rue Saint-Jean, 54000 Nancy",
        bg: "#dbdef9",
        stepBg: "#2f6bb0",
        planned: "08:51",
        actual: "10:33",
        duration: "25min",
        price: "10 €",
        attachments: true,
    },
];

const DeliveryCard = ({ delivery }) => (
    <Card>
        <CardHeader $bg={delivery.bg}>
            <Step $bg={delivery.stepBg}>{delivery.step}</Step>
            <Customer>
                <CustomerName as={delivery.name ? "h3" : "div"}>{delivery.name}</CustomerName>
                <p><Bold>Address :</Bold> {delivery.address}</p>
            </Customer>
            {delivery.target && (
                <TargetIcon width="30" height="30" viewBox="0 0 30 30" aria-hidden="true">
                    <circle cx="15" cy="15" r="13.500" fill="none" stroke="#6f7472" strokeWidth="2.200" />
                    <circle cx="15" cy="15" r="4" fill="#6f7472" />
                </TargetIcon>
            )}
            <Tag $old>{delivery.planned}</Tag>
            <Tag $green={delivery.done}>{delivery.actual}</Tag>
            <MoreButton aria-label="More actions">
                <svg width="24" height="6" viewBox="0 0 24 6">
                    <circle cx="3" cy="3" r="2" />
                    <circle cx="12" cy="3" r="2" />
                    <circle cx="21" cy="3" r="2" />
                </svg>
            </MoreButton>
        </CardHeader>
        <CardBody>
            <SectionTitle>DELIVERY</SectionTitle>
            <Details>
                <p><Bold>Duration</Bold> : {delivery.duration}</p>
                <p><Bold>Assigned driver :</Bold></p>
                <Driver><Dot $size={17} />Alexandre Sanchez | v4</Driver>
                <p><Bold>Id :</Bold> {delivery.id}</p>
                <p><Bold>Price :</Bold> {delivery.price}</p>
                {delivery.items && (
                    <>
                        <ItemsHead aria-expanded="true">
                            <BoxesIcon size={17} sw={2.400} />
                            Items
                            <Icon width={24} height={14} box="0 0 24 14"><path d="M1 13L12 2L23 13" /></Icon>
                        </ItemsHead>
                        <ul>
                            {delivery.items.map((item) => (
                                <Item key={item.name}>
                                    {item.ok ? <CheckBadge /> : <AlertBadge />}
                                    <span><Bold>{item.qty}</Bold> {item.name}</span>
                                    {item.tip && <Tooltip role="tooltip">{item.tip}</Tooltip>}
                                </Item>
                            ))}
                        </ul>
                    </>
                )}
            </Details>
            {delivery.attachments && (
                <Attached>
                    <Bold>Delivery attached files:</Bold>
                    <div>
                        <button aria-label="Attach a file">
                            <Icon><circle cx="16" cy="16" r="15" /><path d="M16 9V23M9 16H23" /></Icon>
                        </button>
                    </div>
                </Attached>
            )}
        </CardBody>
    </Card>
);

const App = () => {
    const progress = 9.52;

    return (
        <Page>
            <GlobalStyle />
            <Frame>
                <Header>
                    <Group>
                        <Brand href="#home">
                            <LogoMark />
                            <span><strong>Ants</strong>Route</span>
                        </Brand>
                        <SiteLabel htmlFor="site">Site</SiteLabel>
                        <SelectBox>
                            <Select id="site" defaultValue="Nancy">
                                <option>Nancy</option>
                            </Select>
                            <svg width="16" height="9" viewBox="0 0 16 9"><path d="M0 0H16L8 9Z" fill="#666" /></svg>
                        </SelectBox>
                    </Group>
                    <Nav>
                        {navItems.map((item) => (
                            <NavLink key={item.label} href="#nav" $active={item.active}>
                                {item.icon}
                                {item.label}
                            </NavLink>
                        ))}
                    </Nav>
                    <Tools>
                        {toolItems.map((item) => (
                            <NavLink key={item.label} href="#tool">
                                {item.icon}
                                {item.label}
                            </NavLink>
                        ))}
                        <IconButton $pad={17} aria-label="Search"><SearchIcon /></IconButton>
                        <IconButton $pad={19} aria-label="Notifications">
                            <BellIcon />
                            <Count>85</Count>
                        </IconButton>
                        <Avatar>MH</Avatar>
                    </Tools>
                </Header>
                <Body>
                    <Sidebar>
                        <Collapse aria-label="Collapse menu">
                            <svg width="12" height="20" viewBox="0 0 12 20" fill="none" stroke="#666" strokeWidth="2"><path d="M11 1L2 10L11 19" /></svg>
                        </Collapse>
                        <SideList>
                            {sideItems.map((item) => (
                                <li key={item.label}>
                                    <SideLink href="#side" $active={item.active}>
                                        {item.icon}
                                        {item.label}
                                    </SideLink>
                                </li>
                            ))}
                        </SideList>
                    </Sidebar>
                    <Main>
                        <TitleBar>
                            <Title>Real time monitoring</Title>
                            <AddButton aria-label="Add">
                                <svg width="24" height="24" viewBox="0 0 24 24" stroke="#fff" strokeWidth="2"><path d="M12 0V24M0 12H24" /></svg>
                            </AddButton>
                        </TitleBar>
                        <RouteBar>
                            <Dot $size={33} />
                            <RouteName>Routes - Alexandre Sanchez | v4</RouteName>
                            <Progress>
                                <ProgressFill style={{ width: `${progress}%` }} />
                                {progress} %
                            </Progress>
                            <button aria-label="Next route">
                                <Icon sw={2.400}><circle cx="16" cy="16" r="14.500" /><path d="M13 9L20 16L13 23" /></Icon>
                            </button>
                            <CloseButton aria-label="Close">
                                <svg width="13" height="13" viewBox="0 0 13 13" stroke="#444" strokeWidth="1.600"><path d="M1 1L12 12M12 1L1 12" /></svg>
                            </CloseButton>
                        </RouteBar>
                        <Columns>
                            <LeftColumn>
                                <Stats>
                                    <Stat><FlagIcon /><div><del>8:00{"\u200a"}AM</del><span>10:05{"\u200a"}AM</span></div></Stat>
                                    <Stat $active><FinishIcon /><div><del>3:53{"\u200a"}PM</del><span>5:35{"\u200a"}PM</span></div></Stat>
                                    <Stat $gap={7} $pad={14}><RoadIcon />8.07 km</Stat>
                                    <Stat $gap={14} $pad={23}><PinIcon />21</Stat>
                                </Stats>
                                <MapBox>
                                    <CityMap />
                                    <ZoomBox>
                                        <ZoomButton aria-label="Zoom in">
                                            <svg width="26" height="26" viewBox="0 0 26 26" stroke="#666" strokeWidth="4"><path d="M13 0V26M0 13H26" /></svg>
                                        </ZoomButton>
                                        <ZoomButton aria-label="Zoom out">
                                            <svg width="26" height="4" viewBox="0 0 26 4" stroke="#666" strokeWidth="4"><path d="M0 2H26" /></svg>
                                        </ZoomButton>
                                    </ZoomBox>
                                </MapBox>
                            </LeftColumn>
                            <List>
                                {deliveries.map((delivery) => (
                                    <DeliveryCard key={delivery.id} delivery={delivery} />
                                ))}
                            </List>
                            <Track><Thumb /></Track>
                        </Columns>
                    </Main>
                </Body>
            </Frame>
        </Page>
    );
};

export default App;
